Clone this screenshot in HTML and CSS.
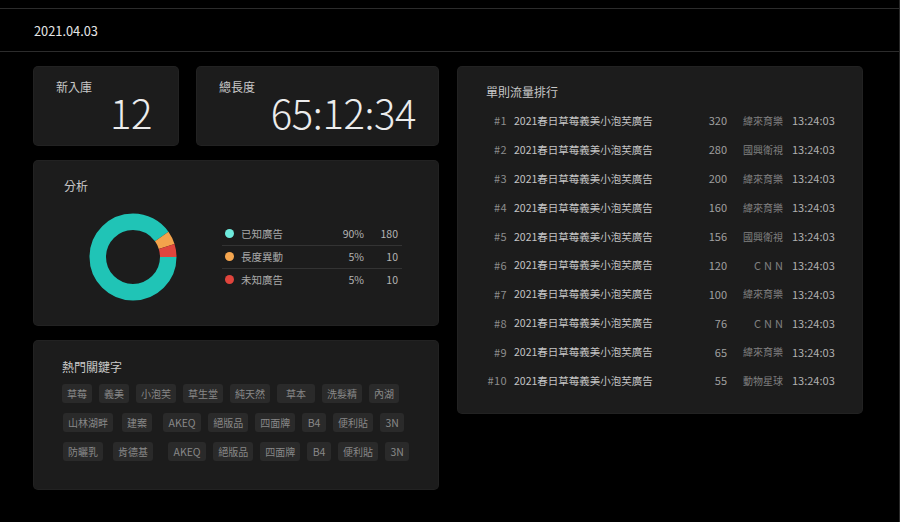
FILE: index.html
```html
<!DOCTYPE html>
<html lang="zh-Hant">
<head>
<meta charset="utf-8">
<title>Dashboard</title>
<link rel="stylesheet" href="styles.css">
</head>
<body>
<div class="app">
  <header class="topbar"><span class="date">2021.04.03</span></header>
  <main class="dashboard">
    <section class="col-left">
      <div class="stats">
        <div class="card stat stat-new">
          <div class="card-title">新入庫</div>
          <div class="stat-value">12</div>
        </div>
        <div class="card stat stat-len">
          <div class="card-title">總長度</div>
          <div class="stat-value">65:12:34</div>
        </div>
      </div>

      <div class="card analysis">
        <div class="card-title">分析</div>
        <div class="analysis-body">
          <svg class="donut" viewBox="0 0 88 88" width="88" height="88">
            <circle cx="44" cy="44" r="35.25" fill="none" stroke="#20c4b6" stroke-width="16.5" stroke-dasharray="199.35 221.5" stroke-dashoffset="0"/>
            <circle cx="44" cy="44" r="35.25" fill="none" stroke="#f4a34c" stroke-width="16.5" stroke-dasharray="11.08 221.5" stroke-dashoffset="-199.35"/>
            <circle cx="44" cy="44" r="35.25" fill="none" stroke="#e0453d" stroke-width="16.5" stroke-dasharray="11.08 221.5" stroke-dashoffset="-210.43"/>
          </svg>
          <ul class="legend">
            <li class="legend-row"><span class="dot dot-teal"></span><span class="legend-label">已知廣告</span><span class="legend-pct">90%</span><span class="legend-count">180</span></li>
            <li class="legend-row"><span class="dot dot-orange"></span><span class="legend-label">長度異動</span><span class="legend-pct">5%</span><span class="legend-count">10</span></li>
            <li class="legend-row"><span class="dot dot-red"></span><span class="legend-label">未知廣告</span><span class="legend-pct">5%</span><span class="legend-count">10</span></li>
          </ul>
        </div>
      </div>

      <div class="card keywords">
        <div class="card-title">熱門關鍵字</div>
        <div class="tag-rows">
          <div class="tag-row">
            <span class="tag">草莓</span><span class="tag">義美</span><span class="tag">小泡芙</span><span class="tag">草生堂</span><span class="tag">純天然</span><span class="tag tag-wide">草本</span><span class="tag">洗髮精</span><span class="tag">內湖</span>
          </div>
          <div class="tag-row row-indent">
            <span class="tag">山林湖畔</span><span class="tag push-2">建案</span><span class="tag tag-en push-4">AKEQ</span><span class="tag">絕版品</span><span class="tag">四面牌</span><span class="tag tag-en">B4</span><span class="tag">便利貼</span><span class="tag tag-en">3N</span>
          </div>
          <div class="tag-row row-indent">
            <span class="tag">防曬乳</span><span class="tag push-3">肯德基</span><span class="tag tag-en push-8">AKEQ</span><span class="tag">絕版品</span><span class="tag">四面牌</span><span class="tag tag-en">B4</span><span class="tag">便利貼</span><span class="tag tag-en">3N</span>
          </div>
        </div>
      </div>
    </section>

    <section class="card ranking">
      <div class="card-title">單則流量排行</div>
      <ol class="rank-list">
        <li class="rank-row"><span class="rank">#1</span><span class="rank-title">2021春日草莓義美小泡芙廣告</span><span class="rank-num">320</span><span class="rank-ch">緯來育樂</span><span class="rank-time">13:24:03</span></li>
        <li class="rank-row"><span class="rank">#2</span><span class="rank-title">2021春日草莓義美小泡芙廣告</span><span class="rank-num">280</span><span class="rank-ch">國興衛視</span><span class="rank-time">13:24:03</span></li>
        <li class="rank-row"><span class="rank">#3</span><span class="rank-title">2021春日草莓義美小泡芙廣告</span><span class="rank-num">200</span><span class="rank-ch">緯來育樂</span><span class="rank-time">13:24:03</span></li>
        <li class="rank-row"><span class="rank">#4</span><span class="rank-title">2021春日草莓義美小泡芙廣告</span><span class="rank-num">160</span><span class="rank-ch">緯來育樂</span><span class="rank-time">13:24:03</span></li>
        <li class="rank-row"><span class="rank">#5</span><span class="rank-title">2021春日草莓義美小泡芙廣告</span><span class="rank-num">156</span><span class="rank-ch">國興衛視</span><span class="rank-time">13:24:03</span></li>
        <li class="rank-row"><span class="rank">#6</span><span class="rank-title">2021春日草莓義美小泡芙廣告</span><span class="rank-num">120</span><span class="rank-ch ch-en">CNN</span><span class="rank-time">13:24:03</span></li>
        <li class="rank-row"><span class="rank">#7</span><span class="rank-title">2021春日草莓義美小泡芙廣告</span><span class="rank-num">100</span><span class="rank-ch">緯來育樂</span><span class="rank-time">13:24:03</span></li>
        <li class="rank-row"><span class="rank">#8</span><span class="rank-title">2021春日草莓義美小泡芙廣告</span><span class="rank-num">76</span><span class="rank-ch ch-en">CNN</span><span class="rank-time">13:24:03</span></li>
        <li class="rank-row"><span class="rank">#9</span><span class="rank-title">2021春日草莓義美小泡芙廣告</span><span class="rank-num">65</span><span class="rank-ch">緯來育樂</span><span class="rank-time">13:24:03</span></li>
        <li class="rank-row"><span class="rank">#10</span><span class="rank-title">2021春日草莓義美小泡芙廣告</span><span class="rank-num">55</span><span class="rank-ch">動物星球</span><span class="rank-time">13:24:03</span></li>
      </ol>
    </section>
  </main>
</div>
</body>
</html>
```

FILE: styles.css
```css
* { box-sizing: border-box; }

html, body {
  margin: 0;
  padding: 0;
  background: #000;
}

body {
  font-family: "Noto Sans CJK TC", "Noto Sans", sans-serif;
  font-weight: 400;
  color: #c8c8c8;
}

.app {
  width: 900px;
  height: 522px;
  padding-top: 8px;
  border-right: 1px solid #2a2a2a;
}

.topbar {
  height: 44px;
  border-top: 1px solid #2c2c2c;
  border-bottom: 1px solid #2c2c2c;
  display: flex;
  align-items: center;
  padding-left: 34px;
}

.date {
  font-size: 12.8px;
  font-weight: 400;
  color: #e6e6e6;
}

.dashboard {
  display: flex;
  align-items: flex-start;
  gap: 20px;
  padding: 15px 34px 0;
}

.col-left {
  width: 404px;
  display: flex;
  flex-direction: column;
  gap: 16px;
}

.card {
  background: #1c1c1c;
  border-radius: 4px;
  box-shadow: 0 0 0 1px #222;
}

.card-title {
  font-size: 12px;
  line-height: 16px;
  color: #c8c8c8;
}

/* stats */
.stats {
  display: flex;
  gap: 19px;
}

.stat {
  height: 78px;
  padding: 12px 22px 0 22px;
}

.stat-new {
  width: 144px;
  padding-right: 26px;
}

.stat-len {
  flex: 1;
}

.stat-value {
  font-size: 40px;
  font-weight: 300;
  line-height: 44px;
  text-align: right;
  color: #ececec;
  margin-top: -5px;
  letter-spacing: -0.4px;
}

/* analysis */
.analysis {
  height: 164px;
  padding: 17px 30px 0 30px;
}

.analysis-body {
  margin-top: 19px;
  display: flex;
  align-items: center;
  height: 88px;
}

.donut {
  display: block;
  margin-left: 25px;
  flex: none;
}

.legend {
  list-style: none;
  margin: -2px 0 0 45px;
  padding: 0;
  width: 180px;
}

.legend-row {
  display: flex;
  align-items: center;
  height: 23px;
  font-size: 10.5px;
  color: #b4b4b4;
}

.legend-row + .legend-row {
  border-top: 1px solid #333;
}

.dot {
  width: 9px;
  height: 9px;
  border-radius: 50%;
  margin: 0 7px 0 3px;
  flex: none;
}

.dot-teal { background: #6eeadc; }
.dot-orange { background: #f5a64f; }
.dot-red { background: #e0443c; }

.legend-label {
  flex: 1;
  color: #a8a8a8;
}

.legend-pct {
  width: 40px;
  text-align: right;
}

.legend-count {
  width: 38px;
  padding-right: 4px;
  text-align: right;
}

/* keywords */
.keywords {
  height: 148px;
  padding: 18px 29px 0 28px;
}

.tag-rows {
  margin-top: 9px;
  display: flex;
  flex-direction: column;
  gap: 10px;
}

.tag-row {
  display: flex;
  gap: 7px;
}

.row-indent {
  padding-left: 1px;
}

.tag {
  height: 19px;
  line-height: 19px;
  padding: 0 5px;
  font-size: 10px;
  color: #888;
  background: #2a2a2a;
  border-radius: 3px;
  white-space: nowrap;
}

.tag-en {
  font-size: 10.5px;
  padding: 0 5.5px;
}

.tag-wide { padding: 0 9px; }
.push-2 { margin-left: 2px; }
.push-3 { margin-left: 3px; }
.push-4 { margin-left: 4px; }
.push-8 { margin-left: 8px; }

/* ranking */
.ranking {
  width: 404px;
  padding: 17px 29px 18px 28px;
}

.rank-list {
  list-style: none;
  margin: 6px 0 0;
  padding: 0;
}

.rank-row {
  display: flex;
  align-items: center;
  height: 28.9px;
  font-size: 11px;
  white-space: nowrap;
}

.rank {
  width: 21px;
  text-align: right;
  color: #8c8c8c;
  letter-spacing: 0.4px;
}

.rank-title {
  flex: 1;
  margin-left: 7px;
  font-size: 10.5px;
  color: #c4c4c4;
}

.rank-num {
  width: 40px;
  text-align: right;
  color: #a0a0a0;
}

.rank-ch {
  width: 50px;
  margin-left: 6px;
  text-align: right;
  font-size: 10px;
  color: #808080;
}

.ch-en {
  font-size: 11px;
  letter-spacing: 3px;
  margin-right: -3px;
  width: 53px;
}

.rank-time {
  width: 41px;
  margin-left: 9px;
  color: #b0b0b0;
}
```
